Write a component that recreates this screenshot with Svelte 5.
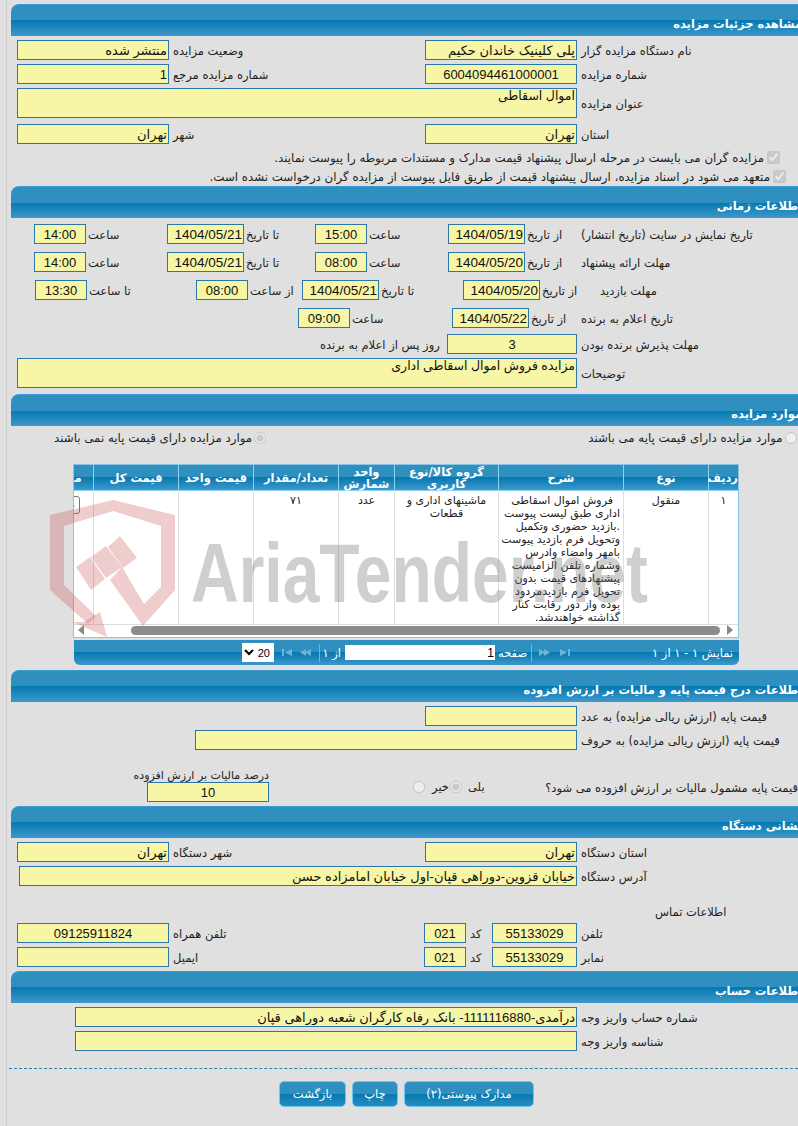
<script>
  const cols = [
    { title: 'ردیف', w: 30, text: ['۱'] },
    { title: 'نوع', w: 85, text: ['منقول'] },
    {
      title: 'شرح',
      w: 125,
      desc: true,
      text: [
        'فروش اموال اسقاطی',
        'اداری طبق لیست پیوست',
        '.بازدید حضوری وتکمیل',
        'وتحویل فرم بازدید پیوست',
        'بامهر وامضاء وادرس',
        'وشماره تلفن الزامیست',
        'پیشنهادهای قیمت بدون',
        'تحویل فرم بازدیدمردود',
        'بوده واز دور رقابت کنار',
        'گذاشته خواهندشد.'
      ]
    },
    { title: 'گروه کالا/نوع کاربری', w: 104, text: ['ماشینهای اداری و', 'قطعات'] },
    { title: 'واحد شمارش', w: 56, text: ['عدد'] },
    { title: 'تعداد/مقدار', w: 85, text: ['۷۱'] },
    { title: 'قیمت واحد', w: 75, text: [] },
    { title: 'قیمت کل', w: 85, text: [] }
  ];
</script>

<div class="page">
  <div class="sec-head">مشاهده جزئیات مزایده</div>
  <section class="sec">
    <div class="row two">
      <input class="fld" dir="rtl" readonly value="منتشر شده" />
      <span class="lbl">وضعیت مزایده</span>
      <input class="fld" dir="rtl" readonly value="پلی کلینیک خاندان حکیم" />
      <span class="lbl">نام دستگاه مزایده گزار</span>
    </div>
    <div class="row two">
      <input class="fld" dir="rtl" readonly value="1" />
      <span class="lbl">شماره مزایده مرجع</span>
      <input class="fld mid" readonly value="6004094461000001" />
      <span class="lbl">شماره مزایده</span>
    </div>
    <div class="row wide">
      <textarea class="fld area" dir="rtl" readonly>اموال اسقاطی</textarea>
      <span class="lbl">عنوان مزایده</span>
    </div>
    <div class="row two city">
      <input class="fld" dir="rtl" readonly value="تهران" />
      <span class="lbl">شهر</span>
      <input class="fld" dir="rtl" readonly value="تهران" />
      <span class="lbl">استان</span>
    </div>
    <div class="checks">
      <label class="check first">
        <input type="checkbox" checked disabled />
        <span dir="rtl">مزایده گران می بایست در مرحله ارسال پیشنهاد قیمت مدارک و مستندات مربوطه را پیوست نمایند.</span>
      </label>
      <label class="check">
        <input type="checkbox" checked disabled />
        <span dir="rtl">متعهد می شود در اسناد مزایده، ارسال پیشنهاد قیمت از طریق فایل پیوست از مزایده گران درخواست نشده است.</span>
      </label>
    </div>
  </section>

  <div class="sec-head">اطلاعات زمانی</div>
  <section class="sec times">
    <div class="row t-a">
      <input class="fld mid" readonly value="14:00" />
      <span class="lbl">ساعت</span>
      <input class="fld date" readonly value="1404/05/21" />
      <span class="lbl">تا تاریخ</span>
      <input class="fld mid" readonly value="15:00" />
      <span class="lbl">ساعت</span>
      <input class="fld date" readonly value="1404/05/19" />
      <span class="lbl">از تاریخ</span>
      <span class="lbl">تاریخ نمایش در سایت (تاریخ انتشار)</span>
    </div>
    <div class="row t-a">
      <input class="fld mid" readonly value="14:00" />
      <span class="lbl">ساعت</span>
      <input class="fld date" readonly value="1404/05/21" />
      <span class="lbl">تا تاریخ</span>
      <input class="fld mid" readonly value="08:00" />
      <span class="lbl">ساعت</span>
      <input class="fld date" readonly value="1404/05/20" />
      <span class="lbl">از تاریخ</span>
      <span class="lbl">مهلت ارائه پیشنهاد</span>
    </div>
    <div class="row t-b">
      <input class="fld mid" readonly value="13:30" />
      <span class="lbl">تا ساعت</span>
      <input class="fld mid" readonly value="08:00" />
      <span class="lbl">از ساعت</span>
      <input class="fld date" readonly value="1404/05/21" />
      <span class="lbl">تا تاریخ</span>
      <input class="fld date" readonly value="1404/05/20" />
      <span class="lbl">از تاریخ</span>
      <span class="lbl">مهلت بازدید</span>
    </div>
    <div class="row t-c">
      <input class="fld mid" readonly value="09:00" />
      <span class="lbl">ساعت</span>
      <input class="fld date" readonly value="1404/05/22" />
      <span class="lbl">از تاریخ</span>
      <span class="lbl">تاریخ اعلام به برنده</span>
    </div>
    <div class="row t-d">
      <span class="lbl end">روز پس از اعلام به برنده</span>
      <input class="fld mid" readonly value="3" />
      <span class="lbl">مهلت پذیرش برنده بودن</span>
    </div>
    <div class="row wide notes">
      <textarea class="fld area" dir="rtl" readonly>مزایده فروش اموال اسقاطی اداری</textarea>
      <span class="lbl">توضیحات</span>
    </div>
  </section>

  <div class="sec-head">موارد مزایده</div>
  <section class="sec items">
    <div class="radios">
      <label class="radio no-base">
        <input type="radio" name="base" disabled checked />
        موارد مزایده دارای قیمت پایه نمی باشند
      </label>
      <label class="radio has-base">
        <input type="radio" name="base" disabled />
        موارد مزایده دارای قیمت پایه می باشند
      </label>
    </div>

    <div class="grid-wrap">
      <table>
        <thead>
          <tr>
            {#each cols as c}
              <th style="width: {c.w}px">{c.title}</th>
            {/each}
            <th class="last">مدارک</th>
          </tr>
        </thead>
        <tbody>
          <tr>
            {#each cols as c}
              <td class:desc={c.desc}>
                {#each c.text as line}
                  <div>{line}</div>
                {/each}
              </td>
            {/each}
            <td class="last"><button class="mini">جزئیات</button></td>
          </tr>
        </tbody>
      </table>
      <div class="hscroll">
        <span class="arr left"></span>
        <span class="thumb"></span>
        <span class="arr right"></span>
      </div>
    </div>

    <div class="pager">
      <select dir="rtl">
        <option>10</option>
        <option selected>20</option>
        <option>30</option>
      </select>
      <svg class="ico" width="10" height="7" viewBox="0 0 10 7"><path d="M0 0h2v7H0zM10 0v7L3 3.5z" /></svg>
      <svg class="ico" width="11" height="7" viewBox="0 0 11 7"><path d="M6 0v7L0 3.5zM11 0v7L5 3.5z" /></svg>
      <span class="sep"></span>
      <span class="pg-txt of">از ۱</span>
      <input class="pg-in" dir="rtl" readonly value="1" />
      <span class="pg-txt">صفحه</span>
      <span class="sep right-sep"></span>
      <svg class="ico" width="11" height="7" viewBox="0 0 11 7"><path d="M0 0v7l6-3.5zM5 0v7l6-3.5z" /></svg>
      <svg class="ico next" width="10" height="7" viewBox="0 0 10 7"><path d="M0 0v7l7-3.5zM8 0h2v7H8z" /></svg>
      <span class="pg-txt count">نمایش ۱ - ۱ از ۱</span>
    </div>
  </section>

  <div class="sec-head">اطلاعات درج قیمت پایه و مالیات بر ارزش افزوده</div>
  <section class="sec price">
    <div class="row two">
      <span></span><span></span>
      <input class="fld" readonly />
      <span class="lbl">قیمت پایه (ارزش ریالی مزایده) به عدد</span>
    </div>
    <div class="row letters">
      <input class="fld" readonly />
      <span class="lbl">قیمت پایه (ارزش ریالی مزایده) به حروف</span>
    </div>
    <div class="vat">
      <div class="vat-box">
        <span class="vat-lbl">درصد مالیات بر ارزش افزوده</span>
        <input class="fld mid" readonly value="10" />
      </div>
      <div class="vat-opts">
        <input type="radio" name="vat" disabled />
        <span class="opt-no">خیر</span>
        <input type="radio" name="vat" disabled checked />
        <span class="opt-yes">بلی</span>
      </div>
      <span class="lbl vat-q">قیمت پایه مشمول مالیات بر ارزش افزوده می شود؟</span>
    </div>
  </section>

  <div class="sec-head">نشانی دستگاه</div>
  <section class="sec address">
    <div class="row two">
      <input class="fld" dir="rtl" readonly value="تهران" />
      <span class="lbl">شهر دستگاه</span>
      <input class="fld" dir="rtl" readonly value="تهران" />
      <span class="lbl">استان دستگاه</span>
    </div>
    <div class="row addr">
      <input class="fld" dir="rtl" readonly value="خیابان قزوین-دوراهی قپان-اول خیابان امامزاده حسن" />
      <span class="lbl">آدرس دستگاه</span>
    </div>
    <div class="contact">اطلاعات تماس</div>
    <div class="row phone">
      <input class="fld mid" readonly value="09125911824" />
      <span class="lbl">تلفن همراه</span>
      <input class="fld mid" readonly value="021" />
      <span class="lbl">کد</span>
      <input class="fld mid" readonly value="55133029" />
      <span class="lbl">تلفن</span>
    </div>
    <div class="row phone">
      <input class="fld" readonly />
      <span class="lbl">ایمیل</span>
      <input class="fld mid" readonly value="021" />
      <span class="lbl">کد</span>
      <input class="fld mid" readonly value="55133029" />
      <span class="lbl">نمابر</span>
    </div>
  </section>

  <div class="sec-head">اطلاعات حساب</div>
  <section class="sec">
    <div class="row account">
      <input class="fld" dir="rtl" readonly value="درآمدی-1111116880- بانک رفاه کارگران شعبه دوراهی قپان" />
      <span class="lbl">شماره حساب واریز وجه</span>
    </div>
    <div class="row account">
      <input class="fld" readonly />
      <span class="lbl">شناسه واریز وجه</span>
    </div>
  </section>

  <div class="divider"></div>

  <div class="actions">
    <button class="btn back">بازگشت</button>
    <button class="btn print">چاپ</button>
    <button class="btn docs">مدارک پیوستی(۲)</button>
  </div>

  <svg class="watermark" width="620" height="150" viewBox="45 495 620 150" aria-hidden="true">
    <path class="shield" d="M50 515 L113 500 L175 515 V590 L143 626 L110 580 L122 567 L144 604 L161 587 V526 L113 511 L64 526 V585 L96 616 L88 624 L50 590 Z" />
    <path class="shield" d="M100 612 L107 637 L72 622 L84 622 Z" />
    <path class="shield" d="M120 536 L137 558 L123 568 L108 547 Z M91 557 L106 546 L122 567 L106 578 Z M76 567 L90 557 L105 579 L91 590 Z" />
    <text class="wm-text" x="191" y="602" textLength="457" lengthAdjust="spacingAndGlyphs">AriaTender.net</text>
  </svg>
</div>

<style>
  :global(body) {
    margin: 0;
    background: #e0e0e0;
  }

  .page {
    position: relative;
    width: 798px;
    height: 1126px;
    padding-top: 4px;
    box-sizing: border-box;
    overflow: hidden;
    font-family: "DejaVu Sans", sans-serif;
    font-size: 11.5px;
    color: #222;
    background: linear-gradient(#cdcdcd, #cdcdcd) 6px 0 / 1px 100% no-repeat #e0e0e0;
  }

  .sec-head {
    box-sizing: border-box;
    width: 793px;
    height: 32px;
    margin-left: 11px;
    padding: 9px 2px 0 0;
    direction: rtl;
    border-top: 1px solid #3a9ad6;
    border-top-left-radius: 8px;
    color: #fff;
    font-size: 11.5px;
    font-weight: bold;
    line-height: 20px;
    white-space: nowrap;
    background: linear-gradient(#2f8fbf 50%, #0479b2 50%, #3f98ca 100%);
  }

  .sec {
    display: flex;
    flex-flow: column nowrap;
    gap: 4px;
    padding-top: 4px;
  }

  .row {
    display: grid;
    height: 20px;
    align-items: center;
  }

  .two {
    grid-template-columns: 152px 256px 152px 300px;
    padding-left: 17px;
  }

  .wide {
    grid-template-columns: 560px 300px;
    height: 30px;
    padding-left: 17px;
  }

  .city {
    margin-top: 2px;
  }

  .lbl {
    justify-self: start;
    direction: rtl;
    white-space: nowrap;
    padding: 2px 4px 0;
  }

  .fld {
    box-sizing: border-box;
    width: 100%;
    height: 20px;
    margin: 0;
    padding: 0 1px;
    border: 1px solid #2a78a8;
    border-radius: 0;
    outline: none;
    color: #111;
    font-family: "Liberation Sans", "DejaVu Sans", sans-serif;
    font-size: 13px;
    background: #f7f5a6;
  }

  .mid {
    text-align: center;
  }

  .date {
    font-size: 13.5px;
    text-align: right;
  }

  .area {
    display: block;
    height: 30px;
    resize: none;
    overflow: hidden;
    font-size: 12.5px;
    line-height: 15px;
  }

  .checks {
    display: flex;
    flex-flow: column nowrap;
  }

  .check {
    display: flex;
    flex-flow: row-reverse nowrap;
    align-items: center;
    justify-content: flex-start;
    direction: ltr;
    height: 19px;
    gap: 3px;
    padding-right: 12px;
    font-size: 11.8px;
    white-space: nowrap;
  }

  .check.first {
    padding-right: 18px;
  }

  .check input {
    width: 13px;
    height: 13px;
    margin: 0;
  }

  .times {
    gap: 8px;
    padding-top: 6px;
  }

  .times .lbl {
    padding-left: 2px;
  }

  .t-a {
    grid-template-columns: 52px 81px 77px 71px 52px 81px 77px 54px 300px;
    padding-left: 34px;
  }

  .t-b {
    grid-template-columns: 52px 109px 52px 54px 77px 84px 77px 58px 300px;
    padding-left: 35px;
  }

  .t-c {
    grid-template-columns: 52px 102px 77px 50px 300px;
    padding-left: 298px;
  }

  .t-d {
    grid-template-columns: 127px 130px 300px;
    margin-top: -2px;
    padding-left: 320px;
  }

  .times .t-d .lbl:last-child,
  .times .notes .lbl {
    padding-left: 4px;
  }

  .times .end {
    padding-left: 0;
  }

  .notes {
    margin: -4px 0 6px;
  }

  .items {
    gap: 0;
    padding-top: 0;
  }

  .radios {
    position: relative;
    display: flex;
    height: 38px;
    font-size: 11.8px;
  }

  .radio {
    display: flex;
    flex-flow: row-reverse nowrap;
    align-items: center;
    gap: 2px;
    height: 22px;
    margin-top: 1px;
    white-space: nowrap;
  }

  .radio input {
    width: 12px;
    height: 12px;
    margin: 0;
  }

  .no-base {
    margin-left: 54px;
  }

  .has-base {
    margin-left: 322px;
  }

  .grid-wrap {
    box-sizing: border-box;
    width: 666px;
    height: 174px;
    margin-left: 73px;
    direction: rtl;
    overflow: hidden;
    border: 1px solid #8cc4e8;
    background: #fff;
  }

  table {
    width: 705px;
    table-layout: fixed;
    border-collapse: separate;
    border-spacing: 0;
  }

  th {
    box-sizing: border-box;
    height: 26px;
    padding: 0;
    border-left: 1px solid #8ed0f0;
    border-bottom: 1px solid #8ed0f0;
    color: #fff;
    font-size: 11.5px;
    font-weight: bold;
    line-height: 12px;
    background: linear-gradient(#2f8fbf 50%, #0479b2 50%, #3f98ca 100%);
  }

  th.last, td.last {
    width: 60px;
  }

  td {
    padding: 3px 3px 0;
    vertical-align: top;
    text-align: center;
    font-size: 11px;
    line-height: 13px;
    white-space: nowrap;
    border-left: 1px solid #ddd;
    border-bottom: 1px solid #ddd;
  }

  td.desc {
    text-align: right;
  }

  td.desc div:first-child {
    padding-right: 7px;
  }

  .mini {
    box-sizing: border-box;
    height: 18px;
    margin: 2px 10px 0 0;
    padding: 0 4px;
    border: 1px solid #777;
    border-radius: 3px;
    font-family: inherit;
    font-size: 11px;
    background: #fff;
  }

  .hscroll {
    display: flex;
    direction: ltr;
    align-items: center;
    height: 14px;
    margin-top: -2px;
    padding-left: 4px;
  }

  .arr {
    width: 0;
    height: 0;
    border-top: 5px solid transparent;
    border-bottom: 5px solid transparent;
  }

  .arr.left {
    border-right: 6px solid #888;
  }

  .arr.right {
    margin-left: 7px;
    border-left: 6px solid #888;
  }

  .thumb {
    width: 589px;
    height: 9px;
    margin-left: 47px;
    border-radius: 5px;
    background: #8c8c8c;
  }

  .pager {
    display: flex;
    box-sizing: border-box;
    align-items: center;
    width: 665px;
    height: 25px;
    margin: 2px 0 5px 74px;
    padding-left: 168px;
    border-radius: 0 0 6px 6px;
    color: #fff;
    background: linear-gradient(#2f8fbf 50%, #0479b2 50%, #3f98ca 100%);
  }

  select {
    width: 32px;
    height: 19px;
    margin-right: 8px;
    padding: 0;
    border: none;
    font-family: "Liberation Sans", sans-serif;
    font-size: 11px;
    background: #fff;
  }

  .ico {
    margin-right: 8px;
    fill: #6fb3d6;
  }

  .sep {
    width: 1px;
    height: 18px;
    margin-right: 6px;
    background: #6fb3d6;
  }

  .pg-txt {
    direction: rtl;
    white-space: nowrap;
    font-size: 11.5px;
  }

  .of {
    width: 15px;
    margin-right: 4px;
  }

  .pg-in {
    box-sizing: border-box;
    width: 150px;
    height: 15px;
    margin-right: 3px;
    padding: 0 1px;
    border: none;
    outline: none;
    font-family: "Liberation Sans", sans-serif;
    font-size: 12px;
    background: #fff;
  }

  .right-sep {
    margin-left: 4px;
    margin-right: 7px;
  }

  .next {
    margin-left: 2px;
  }

  .count {
    margin-left: auto;
    margin-right: 6px;
  }

  .letters {
    grid-template-columns: 382px 300px;
    padding-left: 195px;
  }

  .vat {
    display: flex;
    align-items: flex-end;
    height: 33px;
    margin: 15px 0 4px;
    padding-left: 134px;
  }

  .vat-box {
    display: flex;
    flex-flow: column nowrap;
    align-items: flex-end;
    width: 135px;
  }

  .vat-lbl {
    direction: rtl;
    white-space: nowrap;
    font-size: 11px;
    line-height: 13px;
  }

  .vat-box .fld {
    width: 122px;
  }

  .vat-opts {
    display: flex;
    align-items: center;
    height: 30px;
    margin-left: 144px;
    width: 136px;
  }

  .vat-opts input {
    width: 12px;
    height: 12px;
    margin: 0;
  }

  .opt-no {
    width: 19px;
    margin-left: 6px;
    text-align: center;
  }

  .opt-yes {
    margin-left: 6px;
  }

  .vat-q {
    height: 28px;
    line-height: 28px;
    padding: 0;
  }

  .addr {
    grid-template-columns: 558px 300px;
    padding-left: 19px;
  }

  .address {
    padding-bottom: 4px;
  }

  .contact {
    height: 13px;
    margin-top: 16px;
    padding-left: 655px;
    direction: ltr;
    line-height: 13px;
  }

  .phone {
    grid-template-columns: 152px 255px 42px 26px 85px 300px;
    padding-left: 17px;
  }

  .account {
    grid-template-columns: 502px 300px;
    padding-left: 75px;
  }

  .divider {
    margin: 17px 0 0 9px;
    border-top: 1px dashed #2a80b0;
  }

  .actions {
    display: flex;
    gap: 6px;
    margin-top: 12px;
    padding-left: 279px;
  }

  .btn {
    height: 26px;
    padding: 0;
    border: 1px solid #6cc6ee;
    border-radius: 5px;
    color: #fff;
    font-family: inherit;
    font-size: 11.5px;
    background: linear-gradient(#2f8fbf 50%, #0479b2 50%, #2a8cc0 100%);
  }

  .back {
    width: 67px;
  }

  .print {
    width: 46px;
  }

  .docs {
    width: 130px;
  }

  .watermark {
    position: absolute;
    left: 45px;
    top: 495px;
    pointer-events: none;
  }

  .shield {
    fill: rgba(200, 70, 70, 0.27);
  }

  .wm-text {
    font-family: "Liberation Sans", sans-serif;
    font-size: 84px;
    font-weight: bold;
    fill: rgba(110, 110, 110, 0.33);
  }
</style>
